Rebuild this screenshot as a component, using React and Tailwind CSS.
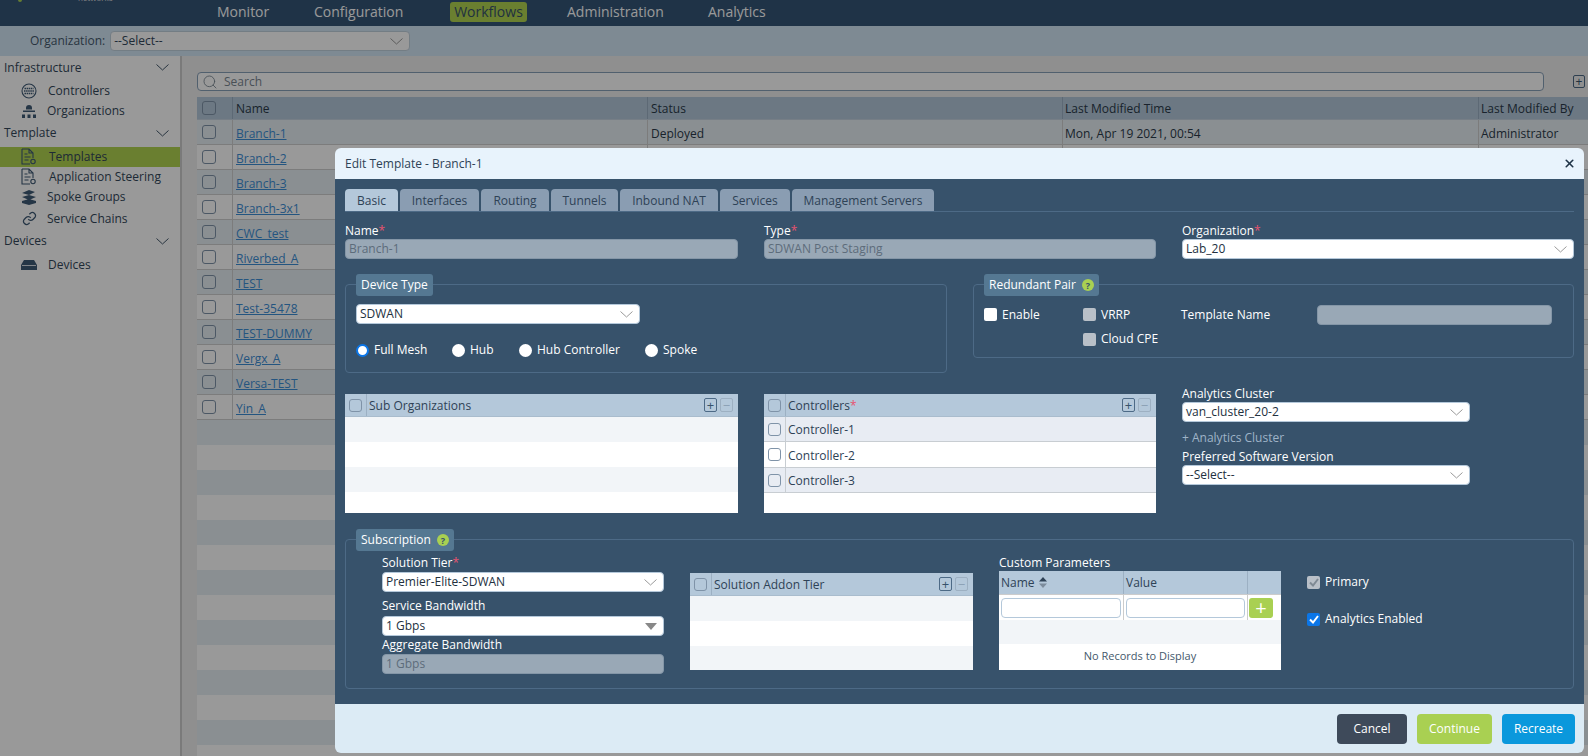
import { Search, X } from 'lucide-react';

const TEMPLATES = ['Branch-1', 'Branch-2', 'Branch-3', 'Branch-3x1', 'CWC_test', 'Riverbed_A', 'TEST', 'Test-35478', 'TEST-DUMMY', 'Vergx_A', 'Versa-TEST', 'Yin_A'];
const TABS = [
  ['Basic', 'w-[53px]'],
  ['Interfaces', 'w-[79px]'],
  ['Routing', 'w-[68px]'],
  ['Tunnels', 'w-[67px]'],
  ['Inbound NAT', 'w-[98px]'],
  ['Services', 'w-[70px]'],
  ['Management Servers', 'w-[142px]'],
];

const Chevron = ({ color = '#9a9a9a' }) => (
  <svg width="13" height="7" viewBox="0 0 13 7" fill="none" stroke={color} strokeWidth="1"><path d="M.5.5l6 5.500 6-5.500" /></svg>
);

const Check = ({ className = '' }) => (
  <span className={`block rounded-[3px] border border-[#7f93a8] bg-transparent shrink-0 ${className || 'w-[13px] h-[13px]'}`}></span>
);

const Star = () => <span className="text-[#e8536f]">*</span>;

const Info = () => (
  <span className="flex w-[12px] h-[12px] rounded-full bg-[#a9d052] items-center justify-center text-[9px] font-bold text-[#37526b] leading-none">?</span>
);

const Label = ({ children, className = '' }) => (
  <div className={`text-[12px] leading-[17px] text-white ${className}`}>{children}</div>
);

const Select = ({ value, className = '', solid }) => (
  <div className={`flex items-center justify-between h-[20px] bg-white rounded-[4px] border border-[#b4c8da] pl-[3px] pr-[6px] text-[12px] text-[#22303e] ${className}`}>
    <span>{value}</span>
    {solid ? (
      <svg width="12" height="7" viewBox="0 0 12 7"><path d="M0 0h12L6 7z" fill="#888" /></svg>
    ) : (
      <Chevron />
    )}
  </div>
);

const Disabled = ({ value, className = '' }) => (
  <div className={`h-[20px] bg-[#99a8b6] rounded-[4px] border border-[#8496a7] px-[3px] text-[12px] leading-[18px] text-[#5d6c7b] ${className}`}>{value}</div>
);

const Legend = ({ children }) => (
  <div className="flex items-center gap-[6px] w-fit h-[22px] -mt-[11px] ml-[10px] px-[5px] rounded-[3px] bg-[#557892] text-[12px] text-white">{children}</div>
);

const Radio = ({ label, on, className }) => (
  <div className={`flex items-center gap-[5px] text-[12px] text-white ${className}`}>
    <span className={`block w-[13px] h-[13px] rounded-full bg-white ${on ? 'border-[2px] border-[#0b76e8]' : ''}`}></span>
    {label}
  </div>
);

const Tick = ({ label, box, className = '' }) => (
  <div className={`flex items-center gap-[5px] text-[12px] text-white ${className}`}>
    {box}
    {label}
  </div>
);

const PlusMinus = () => (
  <div className="flex gap-[3px] mr-[5px]">
    <span className="flex w-[13px] h-[14px] items-center justify-center rounded-[2px] border border-[#4d6a86] text-[#37526b] text-[13px] leading-none">+</span>
    <span className="flex w-[13px] h-[14px] items-center justify-center rounded-[2px] border border-[#9db0c2] text-[#8ba0b4] text-[13px] leading-none">−</span>
  </div>
);

// white list table used inside the dialog
const MiniTable = ({ title, rows = [], count, className = '' }) => (
  <div className={`bg-white ${className}`}>
    <div className="flex items-center h-[23px] bg-[#b4c8da] border-b border-[#a9bccd] text-[12px] text-[#2e4256]">
      <span className="flex items-center justify-center w-[22px] h-full border-r border-[#9cb0c3]"><Check /></span>
      <span className="flex-1 pl-[2px] pt-[2px]">{title}</span>
      <PlusMinus />
    </div>
    {rows.map((r, i) => (
      <div key={r} className={`flex items-center border-b border-[#c8cdd2] text-[12px] text-[#2e4256] ${i % 2 ? 'bg-white h-[26px]' : 'bg-[#e8ecf3] h-[25px]'}`}>
        <span className="flex items-center justify-center w-[22px] h-full border-r border-[#c8cdd2]"><Check /></span>
        <span className={`pl-[2px] ${i % 2 ? 'pt-[3px]' : 'pt-[2px]'}`}>{r}</span>
      </div>
    ))}
    {Array.from({ length: count || 0 }).map((_, i) => (
      <div key={i} className={`h-[25px] ${i % 2 ? 'bg-white' : 'bg-[#f2f5f8]'}`}></div>
    ))}
  </div>
);

const ControllersIcon = () => (
  <svg width="16" height="16" viewBox="0 0 16 16" fill="none" stroke="#3f5a75" strokeWidth="1.1">
    <circle cx="8" cy="8" r="7" />
    <path d="M3.500 5.500h9M3 8h10M3.500 10.500h9" strokeWidth="1.500" strokeDasharray="1.500 .6" />
  </svg>
);
const OrgIcon = () => (
  <svg width="16" height="15" viewBox="0 0 16 15" fill="#3f5a75">
    <path d="M5 4a3 3 0 0 1 6 0v1.500H5zM2 6.500h12V8H2z" />
    <rect x="1" y="10.500" width="3" height="3.500" />
    <rect x="6.500" y="10.500" width="3" height="3.500" />
    <rect x="12" y="10.500" width="3" height="3.500" />
  </svg>
);
const DocIcon = () => (
  <svg width="16" height="18" viewBox="0 0 16 18" fill="none" stroke="#3f5a75" strokeWidth="1.1">
    <path d="M1 1h7l4 4v5M8 1v4h4M1 1v15h8" />
    <path d="M3.500 6h3M3.500 9h6M3.500 12h4" />
    <circle cx="12" cy="13.500" r="2.200" />
  </svg>
);
const SpokeIcon = () => (
  <svg width="16" height="15" viewBox="0 0 16 15" fill="#3f5a75">
    <path d="M1 3l7-3 6 2-6 3zM1 7l7-2 7 2-7 3zM1 11l7-2 7 2v2l-7 2-7-2z" />
  </svg>
);
const LinkIcon = () => (
  <svg width="15" height="15" viewBox="0 0 24 24" fill="none" stroke="#3f5a75" strokeWidth="2">
    <path d="M10 13a5 5 0 0 0 7.500.500l3-3a5 5 0 0 0-7-7l-1.700 1.700" />
    <path d="M14 11a5 5 0 0 0-7.500-.500l-3 3a5 5 0 0 0 7 7l1.700-1.700" />
  </svg>
);
const DeviceIcon = () => (
  <svg width="16" height="10" viewBox="0 0 16 10" fill="#3f5a75">
    <path d="M3 0h10l3 5v5H0V5z" />
    <path d="M1 5.500h14" stroke="#fff" strokeWidth="0.800" />
  </svg>
);

const SideHead = ({ label, className }) => (
  <div className={`flex items-center justify-between pl-[4px] pr-[11px] text-[12px] text-[#33475a] ${className}`}>
    {label}
    <Chevron color="#44586b" />
  </div>
);

const SideItem = ({ icon, label, active, className, textClass }) => (
  <div className={`flex items-center text-[12px] text-[#33475a] ${active ? 'bg-[#b1d450]' : ''} ${className}`}>
    <span className="flex w-[20px] ml-[19px] justify-center">{icon}</span>
    <span className={textClass}>{label}</span>
  </div>
);

const Sidebar = () => (
  <div className="w-[181px] shrink-0 bg-white border-r border-[#ccc] flex flex-col">
    <SideHead label="Infrastructure" className="h-[23px]" />
    <SideItem icon={<ControllersIcon />} label="Controllers" className="h-[21px] mt-[1px]" textClass="ml-[9px]" />
    <SideItem icon={<OrgIcon />} label="Organizations" className="h-[20px]" textClass="ml-[8px]" />
    <SideHead label="Template" className="h-[22px] mt-[1px]" />
    <SideItem icon={<DocIcon />} label="Templates" active className="h-[20px] mt-[3px]" textClass="ml-[10px]" />
    <SideItem icon={<DocIcon />} label="Application Steering" className="h-[20px]" textClass="ml-[10px]" />
    <SideItem icon={<SpokeIcon />} label="Spoke Groups" className="h-[20px]" textClass="ml-[8px]" />
    <SideItem icon={<LinkIcon />} label="Service Chains" className="h-[21px] mt-[1px]" textClass="ml-[8px]" />
    <SideHead label="Devices" className="h-[22px] mt-[1px]" />
    <SideItem icon={<DeviceIcon />} label="Devices" className="h-[20px] mt-[3px]" textClass="ml-[9px]" />
  </div>
);

const Grid = () => {
  const blanks = Array.from({ length: 14 });
  return (
    <div className="flex-1 min-w-0 flex flex-col pt-[16px] pl-[15px] border-l border-[#ccc]">
      <div className="flex items-center h-[19px] mr-[3px] shrink-0">
        <div className="flex-1 flex items-center h-[19px] bg-[#fff] border border-[#88a0b8] rounded-[4px] mr-[29px] pl-[4px] text-[12px] text-[#7a8691]">
          <Search size={16} strokeWidth={1.3} className="mr-[6px]" />
          Search
        </div>
        <span className="flex w-[12px] h-[13px] items-center justify-center rounded-[2px] border border-[#4d6a86] text-[#37526b] text-[12px] leading-none">+</span>
      </div>
      <div className="mt-[6px] shrink-0 grid grid-cols-[36px_415px_415px_416px_1fr] h-[23px] items-center bg-[#b4c8da] border-b border-[#c5d3df] text-[12px] text-[#2a3a4a]">
        <span className="flex pl-[5px] items-center h-full border-r border-[#9cb0c3]"><Check className="w-[14px] h-[14px]" /></span>
        <span className="flex items-center h-full pl-[3px] pt-[2px] border-r border-[#9cb0c3]">Name</span>
        <span className="flex items-center h-full pl-[3px] pt-[2px] border-r border-[#9cb0c3]">Status</span>
        <span className="flex items-center h-full pl-[2px] pt-[2px] border-r border-[#9cb0c3]">Last Modified Time</span>
        <span className="pl-[2px] pt-[2px] truncate">Last Modified By</span>
      </div>
      {TEMPLATES.map((name, i) => (
        <div key={name} className={`grid shrink-0 grid-cols-[36px_415px_415px_416px_1fr] h-[25px] items-center border-b border-[#cfcfcf] text-[12px] text-[#2a3a4a] ${i % 2 ? 'bg-white' : 'bg-[#e6eef3]'}`}>
          <span className="flex pl-[5px] items-center h-full border-r border-[#cfcfcf]"><Check className="w-[14px] h-[14px]" /></span>
          <a className="flex items-center h-full pl-[3px] pt-[3px] border-r border-[#cfcfcf]"><span className="underline text-[#3d8ed6]">{name}</span></a>
          <span className="flex items-center h-full pl-[3px] pt-[3px] border-r border-[#cfcfcf]">{i === 0 ? 'Deployed' : ''}</span>
          <span className="flex items-center h-full pl-[2px] pt-[3px] border-r border-[#cfcfcf]">{i === 0 ? 'Mon, Apr 19 2021, 00:54' : ''}</span>
          <span className="pl-[2px] pt-[3px]">{i === 0 ? 'Administrator' : ''}</span>
        </div>
      ))}
      {blanks.map((_, i) => (
        <div key={i} className={`h-[25px] shrink-0 ${i % 2 ? 'bg-white' : 'bg-[#e6eef3]'}`}></div>
      ))}
    </div>
  );
};

const CustomParams = () => (
  <div className="w-[282px] ml-[26px] shrink-0">
    <Label>Custom Parameters</Label>
    <div className="bg-white h-[99px]">
      <div className="grid grid-cols-[125px_124px_1fr] h-[23px] bg-[#b4c8da] items-center text-[12px] text-[#2e4256]">
        <span className="flex items-center gap-[4px] h-full pl-[2px] border-r border-[#9cb0c3]">
          Name
          <svg width="8" height="11" viewBox="0 0 8 11"><path d="M4 0l4 4.500H0z" fill="#2e4256" /><path d="M4 11L0 6.500h8z" fill="#7c8c9c" /></svg>
        </span>
        <span className="flex items-center h-full pl-[2px] border-r border-[#9cb0c3]">Value</span>
        <span></span>
      </div>
      <div className="grid grid-cols-[125px_124px_1fr] h-[26px] items-center border-t border-[#ccc]">
        <span className="flex items-center h-full pl-[2px] pr-[2px] border-r border-[#ccc]"><span className="block w-full h-[20px] rounded-[4px] border border-[#b4c8da]"></span></span>
        <span className="flex items-center h-full pl-[2px] pr-[2px] border-r border-[#ccc]"><span className="block w-full h-[20px] rounded-[4px] border border-[#b4c8da]"></span></span>
        <span className="flex items-center pl-[1px] h-full">
          <span className="flex w-[24px] h-[20px] rounded-[3px] bg-[#a9d052] items-center justify-center text-white text-[20px] leading-none">+</span>
        </span>
      </div>
      <div className="h-[24px] bg-[#f2f5f8]"></div>
      <div className="h-[25px] flex items-center justify-center text-[11px] text-[#44586b]">No Records to Display</div>
    </div>
  </div>
);

const Dialog = () => (
  <div className="absolute left-[335px] top-[148px] w-[1249px] h-[605px] flex flex-col rounded-[6px] overflow-hidden">
    <div className="flex items-center justify-between h-[31px] shrink-0 bg-[#e8f3fc] pl-[10px] pr-[8px] text-[12px] text-[#2e4256]">
      Edit Template - Branch-1
      <X size={13} strokeWidth={3} className="text-[#1f3346]" />
    </div>
    <div className="flex-1 bg-[#37526b] pt-[10px] pl-[10px] pr-[10px]">
      <div className="flex gap-[2px] h-[23px] border-b border-[#4d6a86]">
        {TABS.map(([t, w], i) => (
          <div key={t} className={`flex items-center justify-center h-[22px] pt-[1px] rounded-t-[4px] text-[12px] text-[#2e4256] ${w} ${i === 0 ? 'bg-[#b4c8da]' : 'bg-[#8a9db2]'}`}>{t}</div>
        ))}
      </div>

      <div className="flex gap-[26px] mt-[10px]">
        <div className="w-[393px]">
          <Label>Name<Star /></Label>
          <Disabled value="Branch-1" />
        </div>
        <div className="w-[392px]">
          <Label>Type<Star /></Label>
          <Disabled value="SDWAN Post Staging" />
        </div>
        <div className="w-[392px]">
          <Label>Organization<Star /></Label>
          <Select value="Lab_20" />
        </div>
      </div>

      <div className="flex gap-[26px] items-start mt-[25px]">
        <div className="w-[602px] h-[89px] rounded-[4px] border border-[#4d6a86]">
          <Legend>Device Type</Legend>
          <Select value="SDWAN" className="w-[284px] ml-[10px] mt-[8px]" />
          <div className="flex items-center ml-[10px] mt-[16px] h-[20px]">
            <Radio label="Full Mesh" on className="w-[96px]" />
            <Radio label="Hub" className="w-[67px]" />
            <Radio label="Hub Controller" className="w-[126px]" />
            <Radio label="Spoke" />
          </div>
        </div>
        <div className="w-[601px] h-[74px] rounded-[4px] border border-[#4d6a86]">
          <Legend>Redundant Pair <Info /></Legend>
          <div className="grid grid-cols-[99px_98px_136px_235px] grid-rows-[23px_26px] items-center ml-[10px] mt-[7px]">
            <Tick label="Enable" box={<span className="block w-[13px] h-[13px] bg-white rounded-[2px]"></span>} />
            <Tick label="VRRP" box={<span className="block w-[13px] h-[13px] bg-[#b9c0c8] rounded-[2px]"></span>} />
            <Label>Template Name</Label>
            <Disabled value="" />
            <span></span>
            <Tick label="Cloud CPE" box={<span className="block w-[13px] h-[13px] bg-[#b9c0c8] rounded-[2px]"></span>} />
          </div>
        </div>
      </div>

      <div className="flex items-start mt-[21px] h-[119px]">
        <MiniTable title="Sub Organizations" count={4} className="w-[393px] h-[119px] overflow-hidden" />
        <MiniTable title={<>Controllers<Star /></>} rows={['Controller-1', 'Controller-2', 'Controller-3']} className="w-[392px] h-[119px] ml-[26px]" />
        <div className="w-[288px] ml-[26px] -mt-[9px]">
          <Label>Analytics Cluster</Label>
          <Select value="van_cluster_20-2" />
          <div className="mt-[7px] text-[12px] leading-[17px] text-[#9fb4c8]">+ Analytics Cluster</div>
          <Label className="mt-[2px]">Preferred Software Version</Label>
          <Select value="--Select--" />
        </div>
      </div>

      <div className="mt-[26px] h-[150px] rounded-[4px] border border-[#4d6a86]">
        <Legend>Subscription <Info /></Legend>
        <div className="flex items-start pl-[36px] mt-[3px]">
          <div className="w-[282px] shrink-0">
            <Label>Solution Tier<Star /></Label>
            <Select value="Premier-Elite-SDWAN" className="mt-[1px]" />
            <Label className="mt-[5px]">Service Bandwidth</Label>
            <Select value="1 Gbps" solid className="mt-[2px]" />
            <Label>Aggregate Bandwidth</Label>
            <Disabled value="1 Gbps" className="mt-[1px]" />
          </div>
          <MiniTable title="Solution Addon Tier" count={3} className="w-[283px] h-[97px] ml-[26px] mt-[19px] overflow-hidden shrink-0" />
          <CustomParams />
          <div className="ml-[26px] mt-[20px] flex flex-col gap-[21px]">
            <Tick label="Primary" className="h-[16px]" box={
              <span className="flex w-[13px] h-[13px] bg-[#b9c0c8] rounded-[2px] items-center justify-center">
                <svg width="10" height="9" viewBox="0 0 10 9" fill="none" stroke="#7f8a94" strokeWidth="2"><path d="M1 4.500l3 3 5-6.500" /></svg>
              </span>
            } />
            <Tick label="Analytics Enabled" className="h-[16px]" box={
              <span className="flex w-[13px] h-[13px] bg-[#0b76e8] rounded-[2px] items-center justify-center">
                <svg width="10" height="9" viewBox="0 0 10 9" fill="none" stroke="#fff" strokeWidth="2"><path d="M1 4.500l3 3 5-6.500" /></svg>
              </span>
            } />
          </div>
        </div>
      </div>
    </div>
    <div className="flex items-center justify-end gap-[10px] h-[49px] shrink-0 bg-[#dcebf5] pr-[9px] text-[12px] text-white">
      <button className="w-[70px] h-[30px] rounded-[4px] bg-[#3e4a5a]">Cancel</button>
      <button className="w-[75px] h-[30px] rounded-[4px] bg-[#a9d052]">Continue</button>
      <button className="w-[73px] h-[30px] rounded-[4px] bg-[#0a98dc]">Recreate</button>
    </div>
  </div>
);

export default function App() {
  return (
    <div className="relative w-[1588px] h-[756px] overflow-hidden font-['Open_Sans',sans-serif] bg-[#eee]">
      <div className="flex items-center h-[26px] pb-[3px] bg-[#345577] text-[14px] text-white relative">
        <span className="absolute left-[18px] -top-[3px] w-[4px] h-[5px] rounded-full bg-[#a9d052]"></span>
        <span className="absolute left-[78px] -top-[8px] text-[8px] text-[#ddd]">networks</span>
        <div className="flex items-center ml-[217px]">
          <span className="w-[97px]">Monitor</span>
          <span className="w-[136px]">Configuration</span>
          <span className="flex items-center justify-center w-[77px] h-[20px] rounded-[3px] bg-[#b1d450] text-[#37526b]">Workflows</span>
          <span className="ml-[40px] w-[141px]">Administration</span>
          <span>Analytics</span>
        </div>
      </div>
      <div className="flex items-center h-[30px] bg-[#d2e6f5] pl-[30px] text-[12px] text-[#44586b]">
        Organization:
        <Select value="--Select--" className="w-[300px] ml-[5px] text-[#33475a] border-[#c0d0dd]" />
      </div>
      <div className="flex h-[700px]">
        <Sidebar />
        <Grid />
      </div>
      <div className="absolute inset-0 bg-black/40"></div>
      <Dialog />
    </div>
  );
}
